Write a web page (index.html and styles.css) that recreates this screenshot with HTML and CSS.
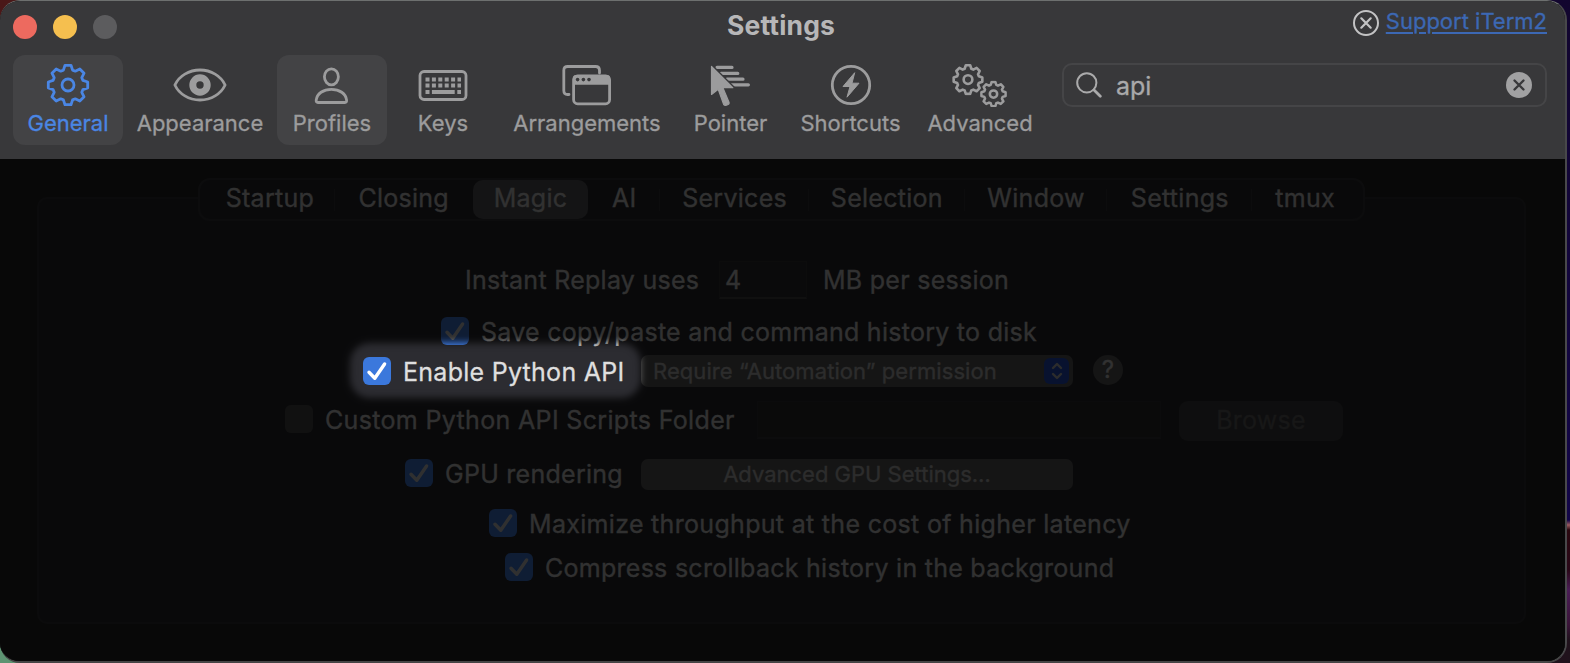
FILE: index.html
```html
<!DOCTYPE html>
<html lang="en">
<head>
<meta charset="utf-8">
<title>Settings</title>
<link rel="stylesheet" href="styles.css">
</head>
<body>
<svg class="defs" width="0" height="0" aria-hidden="true">
  <symbol id="gear" viewBox="-22 -22 44 44">
    <path d="M-4.6-14.9L-3-19.7H3L4.6-14.9L7.28-13.79L11.81-16.05L16.05-11.81L13.79-7.28L14.9-4.6L19.7-3V3L14.9 4.6L13.79 7.28L16.05 11.81L11.81 16.05L7.28 13.79L4.6 14.9L3 19.7H-3L-4.6 14.9L-7.28 13.79L-11.81 16.05L-16.05 11.81L-13.79 7.28L-14.9 4.6L-19.7 3V-3L-14.9-4.6L-13.79-7.28L-16.05-11.81L-11.81-16.05L-7.28-13.79Z"/>
    <circle r="6"/>
  </symbol>
  <symbol id="check" viewBox="0 0 28 28">
    <path d="M6 15.2L11.8 21.2L21.6 7" fill="none" stroke="currentColor" stroke-width="3.4" stroke-linecap="round" stroke-linejoin="round"/>
  </symbol>
</svg>
<div class="window">
  <header class="header">
    <div class="titlebar">
      <div class="lights"><i class="light red"></i><i class="light yellow"></i><i class="light grey"></i></div>
      <h1 class="title">Settings</h1>
      <div class="support">
        <svg width="26" height="26" viewBox="0 0 26 26" fill="none" stroke="#c3c3c4" stroke-linecap="round"><circle cx="13" cy="13" r="12" stroke-width="2"/><path d="M8.3 8.3L17.7 17.7M17.7 8.3L8.3 17.7" stroke-width="2.2"/></svg>
        <a class="link" href="#">Support iTerm2</a>
      </div>
    </div>
    <div class="toolbar">
      <nav class="items">
        <button class="item general active">
          <svg class="icon" viewBox="0 0 56 44"><use href="#gear" x="6" y="0" width="44" height="44" class="stroke28"/></svg>
          <span>General</span>
        </button>
        <button class="item appearance">
          <svg class="icon" viewBox="0 0 56 44"><path class="stroke28" d="M2.9 22C7 13 17 7 28 7S49 13 53.1 22C49 31 39 37 28 37S7 31 2.9 22Z"/><circle cx="28" cy="22" r="7.2" fill="none" stroke="currentColor" stroke-width="7"/></svg>
          <span>Appearance</span>
        </button>
        <button class="item profiles active">
          <svg class="icon" viewBox="0 0 56 44"><ellipse class="stroke28" cx="27.4" cy="13.8" rx="7" ry="8"/><path class="stroke28" d="M13.9 39.5H40.9Q42.8 39.5 42.6 37.2C41.9 30.5 35.4 26.3 27.4 26.3S12.9 30.5 12.2 37.2Q12 39.5 13.9 39.5Z"/></svg>
          <span>Profiles</span>
        </button>
        <button class="item keys">
          <svg class="icon" viewBox="0 0 56 44"><rect class="stroke28" x="5" y="8.5" width="46" height="28" rx="4"/><g stroke="currentColor" stroke-width="4" fill="none"><path d="M10.5 16.4H46" stroke-dasharray="4 2.4"/><path d="M10.5 22.6H46" stroke-dasharray="4 2.4"/><path d="M10.5 28.9H14.5M16.9 28.9H39.7M42.3 28.9H46"/></g></svg>
          <span>Keys</span>
        </button>
        <button class="item arrangements">
          <svg class="icon" viewBox="0 0 56 44"><path class="stroke28" d="M10 31.5H8.5Q4.8 31.5 4.8 27.5V7.5Q4.8 3.5 8.8 3.5H36.5Q40.5 3.5 40.5 7.5V10"/><rect class="stroke28" x="14.6" y="12.8" width="36" height="28" rx="4"/><path fill="currentColor" d="M14 21.8V15q0-3 3-3H48q3 0 3 3V21.8Z"/><g class="cut"><circle cx="18.6" cy="16.6" r="1.8"/><circle cx="24.4" cy="16.6" r="1.8"/><circle cx="30" cy="16.6" r="1.8"/></g></svg>
          <span>Arrangements</span>
        </button>
        <button class="item pointer">
          <svg class="icon" viewBox="0 0 56 44"><path stroke="currentColor" stroke-width="3.2" stroke-linecap="round" d="M14 4.4H29M18 10.4H34.8M24 16.2H40M28 21.8H45.4"/><path class="arrow" d="M8.5 3.5V31.5L15.2 26.3L20.7 41.6Q22 43 24.6 41.7Q26.6 40.8 26 39.2L19.9 24.7H29.8Z"/><path fill="currentColor" stroke="currentColor" stroke-width="1.2" stroke-linejoin="round" d="M8.5 3.5V31.5L15.2 26.3L20.7 41.6Q22 43 24.6 41.7Q26.6 40.8 26 39.2L19.9 24.7H29.8Z"/></svg>
          <span>Pointer</span>
        </button>
        <button class="item shortcuts">
          <svg class="icon" viewBox="0 0 56 44"><circle class="stroke28" cx="28" cy="22" r="18.7"/><path fill="currentColor" stroke="currentColor" stroke-width="1" stroke-linejoin="round" d="M31.7 9.7L20 23.5H27L24 34.2L36 20.2H29Z"/></svg>
          <span>Shortcuts</span>
        </button>
        <button class="item advanced">
          <svg class="icon" viewBox="0 0 56 44"><use href="#gear" x="0" y="0.6" width="32" height="32" class="stroke32"/><use href="#gear" x="28" y="17.6" width="27" height="27" class="stroke36"/></svg>
          <span>Advanced</span>
        </button>
      </nav>
      <div class="search">
        <svg width="26" height="26" viewBox="0 0 26 26" fill="none" stroke="#aaaaab" stroke-linecap="round"><circle cx="10.8" cy="10.8" r="9.6" stroke-width="2"/><path d="M18 18L24.3 24.3" stroke-width="2.8"/></svg>
        <span class="query">api</span>
        <svg width="26" height="26" viewBox="0 0 26 26"><circle cx="13" cy="13" r="13" fill="#a1a1a2"/><path d="M8.5 8.5L17.5 17.5M17.5 8.5L8.5 17.5" stroke="#38383a" stroke-width="2.4" stroke-linecap="round"/></svg>
      </div>
    </div>
  </header>
  <main class="body">
    <div class="tabs">
      <span class="tab startup">Startup</span><span class="tab closing">Closing</span><span class="tab magic selected">Magic</span><span class="tab ai">AI</span><span class="tab services">Services</span><span class="tab selection">Selection</span><span class="tab window-tab">Window</span><span class="tab settings">Settings</span><span class="tab tmux">tmux</span>
    </div>
    <section class="panel">
      <div class="row replay"><span class="t-replay">Instant Replay uses</span><span class="field mb">4</span><span class="t-mb">MB per session</span></div>
      <div class="row history"><i class="box on"><svg><use href="#check"/></svg></i><span class="t-history">Save copy/paste and command history to disk</span></div>
      <div class="row python"><i class="box on lit"><svg><use href="#check"/></svg></i><span class="t-python">Enable Python API</span>
        <div class="popup"><span>Require “Automation” permission</span><i class="stepper"><svg width="26" height="26" viewBox="0 0 26 26" fill="none" stroke="#c6c6c6" stroke-width="2.4" stroke-linecap="round" stroke-linejoin="round"><path d="M9 10L13 6L17 10M9 16L13 20L17 16"/></svg></i></div>
        <i class="help">?</i></div>
      <div class="row scripts"><i class="box"></i><span class="t-scripts">Custom Python API Scripts Folder</span><span class="field path"></span><span class="browse">Browse</span></div>
      <div class="row gpu"><i class="box on"><svg><use href="#check"/></svg></i><span class="t-gpu">GPU rendering</span><span class="button">Advanced GPU Settings…</span></div>
      <div class="row throughput"><i class="box on"><svg><use href="#check"/></svg></i><span class="t-throughput">Maximize throughput at the cost of higher latency</span></div>
      <div class="row compress"><i class="box on"><svg><use href="#check"/></svg></i><span class="t-compress">Compress scrollback history in the background</span></div>
    </section>
    <svg class="dim" viewBox="0 0 1566 503" aria-hidden="true">
      <filter id="soft" x="-10%" y="-50%" width="120%" height="200%"><feGaussianBlur stdDeviation="3.5"/></filter>
      <mask id="hole" maskUnits="userSpaceOnUse" x="0" y="0" width="1566" height="503">
        <rect width="1566" height="503" fill="#fff"/>
        <rect x="350" y="184" width="291" height="55" rx="20" fill="#000" filter="url(#soft)"/>
      </mask>
      <rect width="1566" height="503" fill="#000" fill-opacity=".78" mask="url(#hole)"/>
    </svg>
  </main>
</div>
</body>
</html>
```
FILE: styles.css
```css
* { box-sizing: border-box; }
body {
  margin: 0;
  width: 1570px;
  height: 663px;
  overflow: hidden;
  font-family: Inter, "Liberation Sans", sans-serif;
  background:
    linear-gradient(#4a1818, #4a1818) 0 0 / 30px 30px no-repeat,
    linear-gradient(#5d9472, #5d9472) 0 100% / 30px 30px no-repeat,
    linear-gradient(#12052e 0, #120548 520px, #9a5a60 525px, #2a0810 530px, #2a0818 570px, #4b1d56 590px, #3a1438 625px, #20121c 640px) 100% 0 / 30px 663px no-repeat,
    #000;
}
.defs { position: absolute; }
.window {
  width: 1567px;
  height: 663px;
  border: 1px solid #4c4c4d;
  border-top-color: #6d706f;
  border-right: 2px solid #48484a;
  border-left: 0;
  border-bottom: 2px solid #454545;
  border-radius: 20px;
  overflow: hidden;
  display: flex;
  flex-direction: column;
  background: #080808;
}
.header { height: 158px; background: #38383a; flex: none; -webkit-text-stroke: 0.3px currentColor; }
.titlebar {
  height: 54px;
  display: grid;
  grid-template-columns: 1fr auto 1fr;
  padding: 0 17px 0 14px;
}
.lights { display: flex; gap: 16px; padding-top: 14px; margin-left: -1px; }
.light { width: 24px; height: 24px; border-radius: 50%; }
.red { background: #ed6a5f; }
.yellow { background: #f5bf4f; }
.grey { background: #5c5c5e; }
.title { margin: 0; padding-top: 8px; font-size: 26.5px; line-height: 32px; font-weight: 700; color: #b7b7b8; letter-spacing: 0.15px; -webkit-text-stroke: 0; }
.support { display: flex; justify-content: flex-end; gap: 7px; padding-top: 9px; margin-right: 1px; }
.link { color: #3c68b4; font-size: 22px; line-height: 23px; text-decoration-thickness: 2px; text-underline-offset: 3px; }
.toolbar { display: flex; gap: 17px; padding: 0 18px 0 13px; }
.items { display: flex; }
.item {
  border: 0;
  background: none;
  font: inherit;
  height: 90px;
  padding: 8px 0 0;
  border-radius: 12px;
  display: flex;
  flex-direction: column;
  align-items: center;
  font-size: 22px;
  line-height: 32px;
  color: #9c9c9d;
  white-space: nowrap;
}
.item.active { background: #434345; }
.item.general { color: #4a86e4; }
.item.general, .item.profiles { width: 110px; }
.item.appearance { width: 154px; }
.item.keys { width: 112px; }
.item.arrangements { width: 176px; }
.item.pointer { width: 111px; }
.item.shortcuts { width: 129px; }
.item.advanced { width: 130px; }
.icon { width: 56px; height: 44px; flex: none; }
.stroke28, .stroke32, .stroke36 { fill: none; stroke: currentColor; stroke-width: 2.8px; stroke-linejoin: round; stroke-linecap: round; }
.stroke32 { stroke-width: 3.6px; }
.stroke36 { stroke-width: 4.1px; }
.cut { fill: #38383a; }
.arrow { fill: #38383a; stroke: #38383a; stroke-width: 4px; }
.search {
  width: 486px;
  height: 44px;
  margin-top: 8px;
  padding: 0 13px 0 12px;
  border: 2px solid #454547;
  border-radius: 10px;
  display: flex;
  align-items: center;
  font-size: 25px;
  color: #a9a9aa;
}
.query { flex: 1; padding: 2px 0 0 14px; }
.body {
  position: relative;
  flex: 1;
  background: #252525;
  color: #dfdfdf;
  font-size: 25px;
  letter-spacing: 0.27px;
  -webkit-text-stroke: 0.3px currentColor;
}
.tabs {
  position: relative;
  z-index: 1;
  width: 1167px;
  height: 43px;
  margin: 19px 0 0 198px;
  padding: 0 5px;
  border: 2px solid #38383c;
  border-radius: 12px;
  background: #2c2c31;
  display: flex;
}
.tab { line-height: 37px; text-align: center; white-space: nowrap; }
.startup { width: 130px; }
.closing { width: 138px; }
.magic { width: 116px; }
.ai { width: 72px; }
.services { width: 149px; }
.selection { width: 156px; }
.window-tab { width: 143px; }
.settings { width: 145px; }
.tmux { width: 106px; }
.startup, .ai, .services, .selection, .window-tab, .settings { background: linear-gradient(#38383d, #38383d) 100% 50% / 1px 22px no-repeat; }
.selected { background: #5c5c60; border-radius: 10px; }
.panel {
  width: 1489px;
  height: 427px;
  margin: -24px 0 0 37px;
  padding-top: 50px;
  padding-left: 1px;
  border: 2px solid #343437;
  border-radius: 10px;
  background: #2c2c31;
}
.row { display: flex; align-items: center; white-space: nowrap; }
.replay { height: 62px; padding-left: 425px; }
.history { height: 41px; padding-left: 401px; }
.python { height: 39px; padding-left: 323px; }
.scripts { height: 58px; padding-left: 245px; }
.gpu { height: 50px; padding-left: 365px; }
.throughput { height: 49px; padding-left: 449px; letter-spacing: 0.31px; }
.compress { height: 39px; padding-left: 465px; }
.t-replay { width: 254px; }
.t-gpu { width: 196px; }
.t-python { width: 238px; }
.t-scripts { width: 432px; letter-spacing: 0.34px; }
.box { width: 28px; height: 28px; margin: 0 12px 2px 0; border-radius: 6px; background: #505050; flex: none; }
.box.on { background: #4584ee; color: #dcdcdc; }
.box.lit { background: #3b78dc; color: #fff; }
.box svg { display: block; width: 28px; height: 28px; }
.field { background: #303034; border: 1px solid #36363a; border-bottom: 2px solid #48484c; }
.mb { width: 88px; height: 38px; padding-left: 5px; line-height: 36px; margin-right: 16px; }
.path { width: 404px; height: 38px; background: #2d2d31; border-color: #323236; border-bottom-color: #3a3a3e; }
.popup { width: 432px; height: 32px; margin-top: -2px; padding: 0 4px 0 12px; border-radius: 7px; background: #606060; font-size: 22px; letter-spacing: 0.08px; display: flex; align-items: center; justify-content: space-between; color: #c8c8c8; }
.stepper { width: 25px; height: 26px; border-radius: 6px; background: #2455d4; overflow: hidden; }
.stepper svg { display: block; }
.help { width: 30px; height: 30px; margin: -3px 0 0 20px; border-radius: 50%; background: #606060; text-align: center; font-style: normal; line-height: 30px; font-size: 24px; }
.browse { width: 164px; height: 40px; margin: 1px 0 0 18px; border-radius: 9px; background: #404044; color: #686868; text-align: center; line-height: 39px; }
.button { width: 432px; height: 31px; border-radius: 7px; background: #606060; text-align: center; font-size: 22px; letter-spacing: 0; line-height: 31px; color: #c8c8c8; }
.dim { position: absolute; left: 0; top: 0; width: 1566px; height: 503px; z-index: 2; }
```
